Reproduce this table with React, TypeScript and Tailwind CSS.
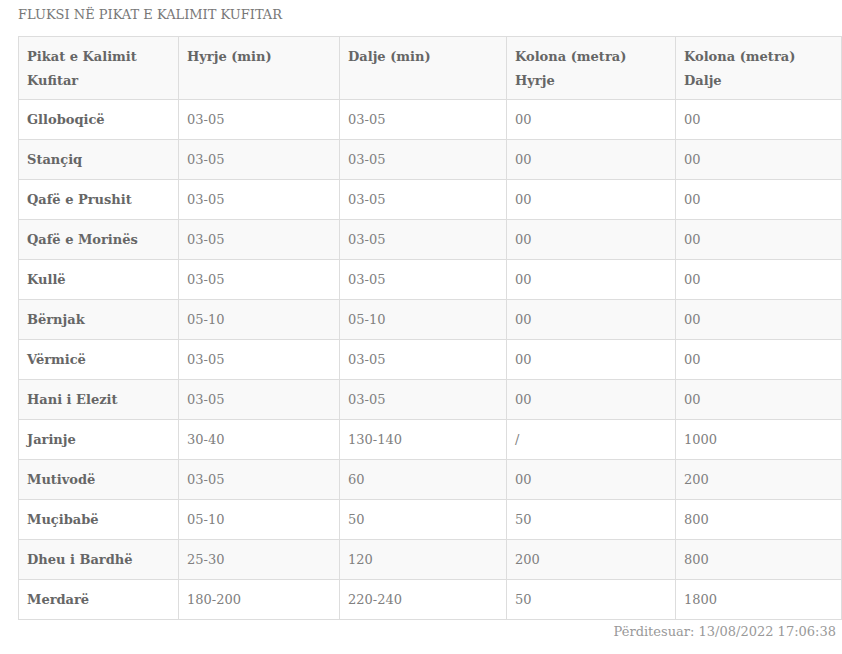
const rows: [string, string, string, string, string][] = [
  ["Glloboqicë", "03-05", "03-05", "00", "00"],
  ["Stançiq", "03-05", "03-05", "00", "00"],
  ["Qafë e Prushit", "03-05", "03-05", "00", "00"],
  ["Qafë e Morinës", "03-05", "03-05", "00", "00"],
  ["Kullë", "03-05", "03-05", "00", "00"],
  ["Bërnjak", "05-10", "05-10", "00", "00"],
  ["Vërmicë", "03-05", "03-05", "00", "00"],
  ["Hani i Elezit", "03-05", "03-05", "00", "00"],
  ["Jarinje", "30-40", "130-140", "/", "1000"],
  ["Mutivodë", "03-05", "60", "00", "200"],
  ["Muçibabë", "05-10", "50", "50", "800"],
  ["Dheu i Bardhë", "25-30", "120", "200", "800"],
  ["Merdarë", "180-200", "220-240", "50", "1800"],
];

const headers = [
  "Pikat e Kalimit Kufitar",
  "Hyrje (min)",
  "Dalje (min)",
  "Kolona (metra) Hyrje",
  "Kolona (metra) Dalje",
];

const App = () => {
  return (
    <div className="min-h-[654px] bg-white pl-[18px] pt-[4px] font-['DejaVu_Serif',serif]">
      <h3 className="mb-[10px] h-[22px] font-['DejaVu_Serif',serif] text-[13px] leading-[22px] text-[#777]">
        FLUKSI NË PIKAT E KALIMIT KUFITAR
      </h3>
      <table className="w-[823px] table-fixed border-collapse font-['DejaVu_Serif',serif] text-[13px] leading-[24px]">
        <colgroup>
          <col className="w-[160px]" />
          <col className="w-[161px]" />
          <col className="w-[167px]" />
          <col className="w-[169px]" />
          <col className="w-[166px]" />
        </colgroup>
        <thead>
          <tr className="bg-[#f9f9f9]">
            {headers.map((h) => (
              <th
                key={h}
                className="h-[62px] border border-[#ddd] px-[8px] pt-[8px] pb-[6px] text-left align-top font-bold text-[#666]"
              >
                {h}
              </th>
            ))}
          </tr>
        </thead>
        <tbody>
          {rows.map((r, i) => (
            <tr key={r[0]} className={i % 2 === 1 ? "bg-[#f9f9f9]" : "bg-white"}>
              {r.map((c, j) => (
                <td
                  key={j}
                  className={`h-[40px] border border-[#ddd] px-[8px] py-[7px] align-middle ${
                    j === 0 ? "font-bold text-[#666]" : "text-[#808080]"
                  }`}
                >
                  {c}
                </td>
              ))}
            </tr>
          ))}
        </tbody>
      </table>
      <div className="w-[823px] pr-[5px] pt-[2px] text-right text-[13px] leading-[20px] text-[#999]">
        Përditesuar: 13/08/2022 17:06:38
      </div>
    </div>
  );
};

export default App;
